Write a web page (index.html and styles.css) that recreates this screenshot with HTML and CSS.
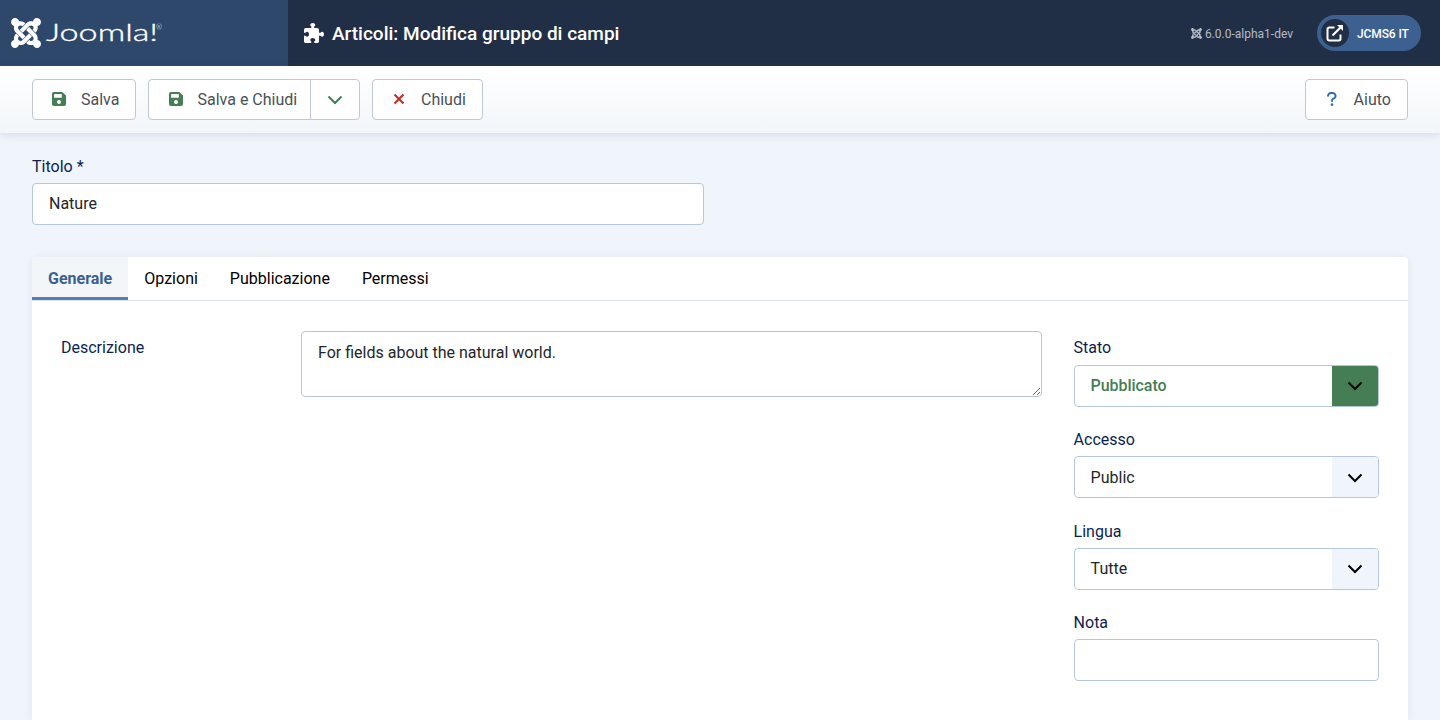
FILE: index.html
```html
<!DOCTYPE html>
<html lang="it">
<head>
<meta charset="utf-8">
<title>Articoli: Modifica gruppo di campi</title>
<link rel="stylesheet" href="styles.css">
</head>
<body>
<svg class="defs" aria-hidden="true">
  <symbol id="joomla" viewBox="0 32 448 448"><path d="M.6 92.1C.6 58.8 27.4 32 60.4 32c30 0 54.5 21.9 59.2 50.2 32.6-7.6 67.1.6 96.5 30l-44.3 44.3c-20.5-20.5-42.6-16.3-55.4-3.5-14.3 14.3-14.3 37.9 0 52.2l99.5 99.5-44 44.3c-87.7-87.2-49.7-49.7-99.8-99.7-26.8-26.5-35-64.8-24.8-98.9C20.4 144.6.6 120.7.6 92.1zm129.5 116.4l44.3 44.3c10-10 89.7-89.7 99.7-99.8 14.3-14.3 37.6-14.3 51.9 0 12.8 12.8 17 35-3.5 55.4l44 44.3c31.2-31.2 38.5-67.6 28.9-101.2 29.2-4.1 51.9-29.2 51.9-59.5 0-33.2-26.8-60.1-59.8-60.1-30.3 0-55.4 22.5-59.5 51.6-33.8-9.9-71.7-1.5-98.3 25.1-18.3 19.1-71.1 71.5-99.6 99.9zm266.3 152.2c8.2-32.7-.9-68.5-26.3-93.9-11.8-12.2 5 4.7-99.5-99.7l-44.3 44.3 99.7 99.7c14.3 14.3 14.3 37.6 0 51.9-12.8 12.8-35 17-55.4-3.5l-44 44.3c27.6 30.2 68 38.8 102.7 28 5.5 27.4 29.7 48.1 58.9 48.1 33 0 59.8-26.8 59.8-60.1 0-30.2-22.5-55-51.6-59.1zm-84.3-53.1l-44-44.3c-87 86.4-50.4 50.4-99.7 99.8-14.3 14.3-37.6 14.3-51.9 0-13.1-13.4-16.9-35.3 3.2-55.4l-44-44.3c-30.2 30.2-38 65.2-29.5 98.3-26.7 6-46.2 29.9-46.2 58.2C0 453.2 26.8 480 59.8 480c28.6 0 52.5-19.8 58.6-46.7 32.7 8.2 68.5-.6 94.2-26 32.1-32 12.2-12.4 99.5-99.7z"/></symbol>
  <symbol id="save" viewBox="0 0 14 14"><path fill-rule="evenodd" d="M2 0H10.2L14 3.6V12a2 2 0 0 1-2 2H2a2 2 0 0 1-2-2V2a2 2 0 0 1 2-2zM2.6 2.1a.5.5 0 0 0-.5.5V5.3a.5.5 0 0 0 .5.5H9.3a.5.5 0 0 0 .5-.5V2.6a.5.5 0 0 0-.5-.5zM7 8a2 2 0 1 0 0 4a2 2 0 1 0 0-4z"/></symbol>
  <symbol id="chevron" viewBox="0 0 16 10"><path d="M1.5 1.5 8 8 14.500 1.500" fill="none" stroke="currentColor" stroke-width="2"/></symbol>
</svg>
<header class="header">
  <div class="logo">
    <svg class="logo-mark"><use href="#joomla"/></svg>
    <svg class="logo-name" viewBox="0 0 116 34"><text x="-1" y="25" textLength="112" lengthAdjust="spacingAndGlyphs">Joomla!</text><text class="reg" x="109" y="13.500">®</text></svg>
  </div>
  <div class="page-title">
    <svg class="puzzle" viewBox="0 0 512 512"><path d="M192 104.8c0-9.2-5.8-17.3-13.2-22.8C167.2 73.3 160 61.3 160 48c0-26.5 28.7-48 64-48s64 21.5 64 48c0 13.3-7.2 25.3-18.8 34c-7.4 5.5-13.2 13.6-13.2 22.8c0 12.8 10.4 23.2 23.2 23.2H336c26.5 0 48 21.5 48 48v56.8c0 12.8 10.4 23.2 23.2 23.2c9.2 0 17.3-5.8 22.8-13.2c8.7-11.6 20.7-18.8 34-18.8c26.5 0 48 28.7 48 64s-21.5 64-48 64c-13.3 0-25.3-7.2-34-18.8c-5.5-7.4-13.6-13.2-22.8-13.2c-12.8 0-23.2 10.4-23.2 23.2V464c0 26.5-21.5 48-48 48H279.2c-12.8 0-23.2-10.4-23.2-23.2c0-9.2 5.8-17.3 13.2-22.8c11.6-8.7 18.8-20.7 18.8-34c0-26.5-28.7-48-64-48s-64 21.5-64 48c0 13.3 7.2 25.3 18.8 34c7.4 5.5 13.2 13.6 13.2 22.8c0 12.8-10.4 23.2-23.2 23.2H48c-26.5 0-48-21.5-48-48V343.2C0 330.4 10.4 320 23.2 320c9.2 0 17.3 5.8 22.8 13.2C54.7 344.8 66.7 352 80 352c26.5 0 48-28.7 48-64s-21.5-64-48-64c-13.3 0-25.3 7.2-34 18.8C40.5 250.2 32.4 256 23.2 256C10.4 256 0 245.6 0 232.8V176c0-26.5 21.500-48 48-48H168.800c12.800 0 23.200-10.400 23.200-23.200z"/></svg>
    <h1>Articoli: Modifica gruppo di campi</h1>
  </div>
  <div class="version"><svg><use href="#joomla"/></svg><span>6.0.0-alpha1-dev</span></div>
  <a class="site-link"><span class="site-icon"><svg viewBox="0 0 18 18"><path d="M8.500 3.500H3.200A1.700 1.700 0 0 0 1.500 5.200V14.800A1.700 1.700 0 0 0 3.200 16.500H12.800A1.700 1.700 0 0 0 14.500 14.800V10.500" fill="none" stroke="currentColor" stroke-width="2"/><path d="M6.500 11.500 14.500 3.500" stroke="currentColor" stroke-width="2.200"/><path d="M11 1H17V7z" fill="currentColor"/></svg></span><span>JCMS6 IT</span></a>
</header>
<div class="toolbar">
  <button class="btn save"><svg class="ic-save"><use href="#save"/></svg>Salva</button>
  <div class="group">
    <button class="btn save-close"><svg class="ic-save"><use href="#save"/></svg>Salva e Chiudi</button>
    <button class="btn split"><svg class="chev"><use href="#chevron"/></svg></button>
  </div>
  <button class="btn close"><svg class="ic-close" viewBox="0 0 12 12"><path d="M1.500 1.500 10.500 10.500M10.500 1.500 1.500 10.500" fill="none" stroke="currentColor" stroke-width="2"/></svg>Chiudi</button>
  <button class="btn help"><svg class="ic-help" viewBox="0 0 10 14"><path d="M1 4.500V4A3 3 0 0 1 4 1H6A2.800 2.800 0 0 1 7 6.300L5.800 7Q5 7.500 5 8.500V9.700" fill="none" stroke="currentColor" stroke-width="1.900"/><circle cx="5" cy="12.600" r="1.300" fill="currentColor"/></svg>Aiuto</button>
</div>
<main class="content">
  <label class="label">Titolo *</label>
  <div class="control title-input">Nature</div>
  <section class="card">
    <nav class="tabs"><a class="tab active">Generale</a><a class="tab">Opzioni</a><a class="tab">Pubblicazione</a><a class="tab">Permessi</a></nav>
    <div class="panel">
      <label class="desc-label">Descrizione</label>
      <textarea class="description">For fields about the natural world.</textarea>
      <aside class="side">
        <div class="field"><label class="label">Stato</label><div class="control select published"><span>Pubblicato</span><i class="arrow"><svg class="chev"><use href="#chevron"/></svg></i></div></div>
        <div class="field"><label class="label">Accesso</label><div class="control select"><span>Public</span><i class="arrow"><svg class="chev"><use href="#chevron"/></svg></i></div></div>
        <div class="field"><label class="label">Lingua</label><div class="control select"><span>Tutte</span><i class="arrow"><svg class="chev"><use href="#chevron"/></svg></i></div></div>
        <div class="field"><label class="label">Nota</label><div class="control"></div></div>
      </aside>
    </div>
  </section>
</main>
</body>
</html>
```
FILE: styles.css
```css
* { box-sizing: border-box; }
body { margin: 0; height: 720px; overflow: hidden; display: flex; flex-direction: column; background: #f0f4fb; color: #22262a; font: 400 16px/24px Roboto, sans-serif; }
.defs { display: none; }
svg { flex: none; fill: currentColor; }
.header { height: 66px; flex: none; display: flex; align-items: center; background: #212f46; color: #fff; padding-right: 19px; }
.logo { width: 288px; height: 66px; background: #2e486b; display: flex; align-items: center; padding-left: 11px; }
.logo-mark { width: 30px; height: 30px; }
.logo-name { width: 116px; height: 34px; margin-left: 6px; overflow: visible; }
.logo-name text { font: 300 24px Lato, sans-serif; stroke: currentColor; stroke-width: .35px; }
.logo-name .reg { font-size: 7px; stroke: none; }
.page-title { display: flex; align-items: center; gap: 8px; padding-left: 16px; flex: 1; }
.puzzle { width: 20px; height: 20px; }
h1 { margin: 0; font-size: 19px; line-height: 24px; font-weight: 500; padding-top: 1px; }
.version { display: flex; align-items: center; gap: 3px; font-size: 12px; color: #b4bbc6; margin-right: 24px; padding-top: 1px; }
.version svg { width: 11px; height: 11px; }
.site-link { height: 36px; width: 104px; border-radius: 18px; background: #3c6090; display: flex; align-items: center; padding: 1px 0 0 4px; gap: 8px; font-size: 12px; font-weight: 500; letter-spacing: -.1px; white-space: nowrap; }
.site-icon { width: 28px; height: 28px; margin-top: -1px; border-radius: 50%; background: #212f46; display: flex; align-items: center; justify-content: center; }
.site-icon svg { width: 18px; height: 18px; }
.toolbar { height: 67px; flex: none; display: flex; align-items: center; padding: 0 32px; gap: 12px; background: linear-gradient(#fff, #f2f6f9); box-shadow: 0 2px 8px rgba(40, 70, 130, .13); }
.btn { height: 41px; display: flex; align-items: center; padding: 0 0 0 19px; border: 1px solid #bfc8d6; border-radius: 4px; background: #fff; color: #495057; font: 400 16px/24px Roboto, sans-serif; white-space: nowrap; }
.ic-save { width: 14px; height: 14px; color: #457d54; margin: 0 15px 1px 0; }
.save { width: 104px; }
.group { display: flex; }
.save-close { width: 163px; border-radius: 4px 0 0 4px; padding-left: 19.5px; }
.split { width: 50px; margin-left: -1px; border-radius: 0 4px 4px 0; padding: 0; justify-content: center; color: #457d54; }
.chev { width: 16px; height: 10px; }
.close { width: 111px; padding-left: 20px; }
.ic-close { width: 12px; height: 12px; color: #c52827; margin: 0 16px 1px 0; }
.help { width: 103px; margin-left: auto; padding-left: 21px; }
.ic-help { width: 10px; height: 14px; color: #2a69b8; margin: 0 16.6px 1px 0; }
.content { flex: 1; min-height: 0; padding: 22px 32px 0; display: flex; flex-direction: column; }
.label { display: block; height: 24px; margin-bottom: 4px; }
.label, .desc-label { color: #0b1f52; }
.control { height: 42px; border: 1px solid #b5c7df; border-radius: 4px; background: #fff; padding: 8px 16px; }
.title-input { width: 672px; }
.card { margin-top: 32px; flex: 1; min-height: 0; background: #fff; border-radius: 4px 4px 0 0; box-shadow: 0 2px 10px rgba(40, 70, 130, .08); }
.tabs { display: flex; height: 44px; border-bottom: 1px solid #d8e1ee; }
.tab { padding: 10px 16px; color: #000; height: 43px; }
.active { width: 96.3px; background: #f2f6f9; color: #3c6090; font-weight: 700; border-bottom: 3px solid #5b7da8; border-radius: 4px 0 0; }
.panel { display: flex; padding: 30px 29px 0; align-items: flex-start; }
.desc-label { width: 240px; padding-top: 5px; }
.description { width: 741px; height: 66px; border: 1px solid #b5c7df; border-radius: 4px; padding: 9px 16px; font: 400 16px/24px Roboto, sans-serif; color: #22262a; resize: vertical; }
.side { width: 305.4px; margin: 5.48px 0 0 31.6px; display: flex; flex-direction: column; gap: 21.38px; }
.side .label { margin-bottom: 4.2px; }
.select { display: flex; justify-content: space-between; padding: 8.5px 0 7.5px 16px; }
.arrow { width: 46px; margin: -8.5px 0 -7.5px; padding: 1px 0 0; background: #f0f4fb; border-radius: 0 3px 3px 0; color: #000; display: flex; align-items: center; justify-content: center; }
.published { color: #457d54; font-weight: 500; letter-spacing: -.05px; }
.published .arrow { background: #457d54; }
```
